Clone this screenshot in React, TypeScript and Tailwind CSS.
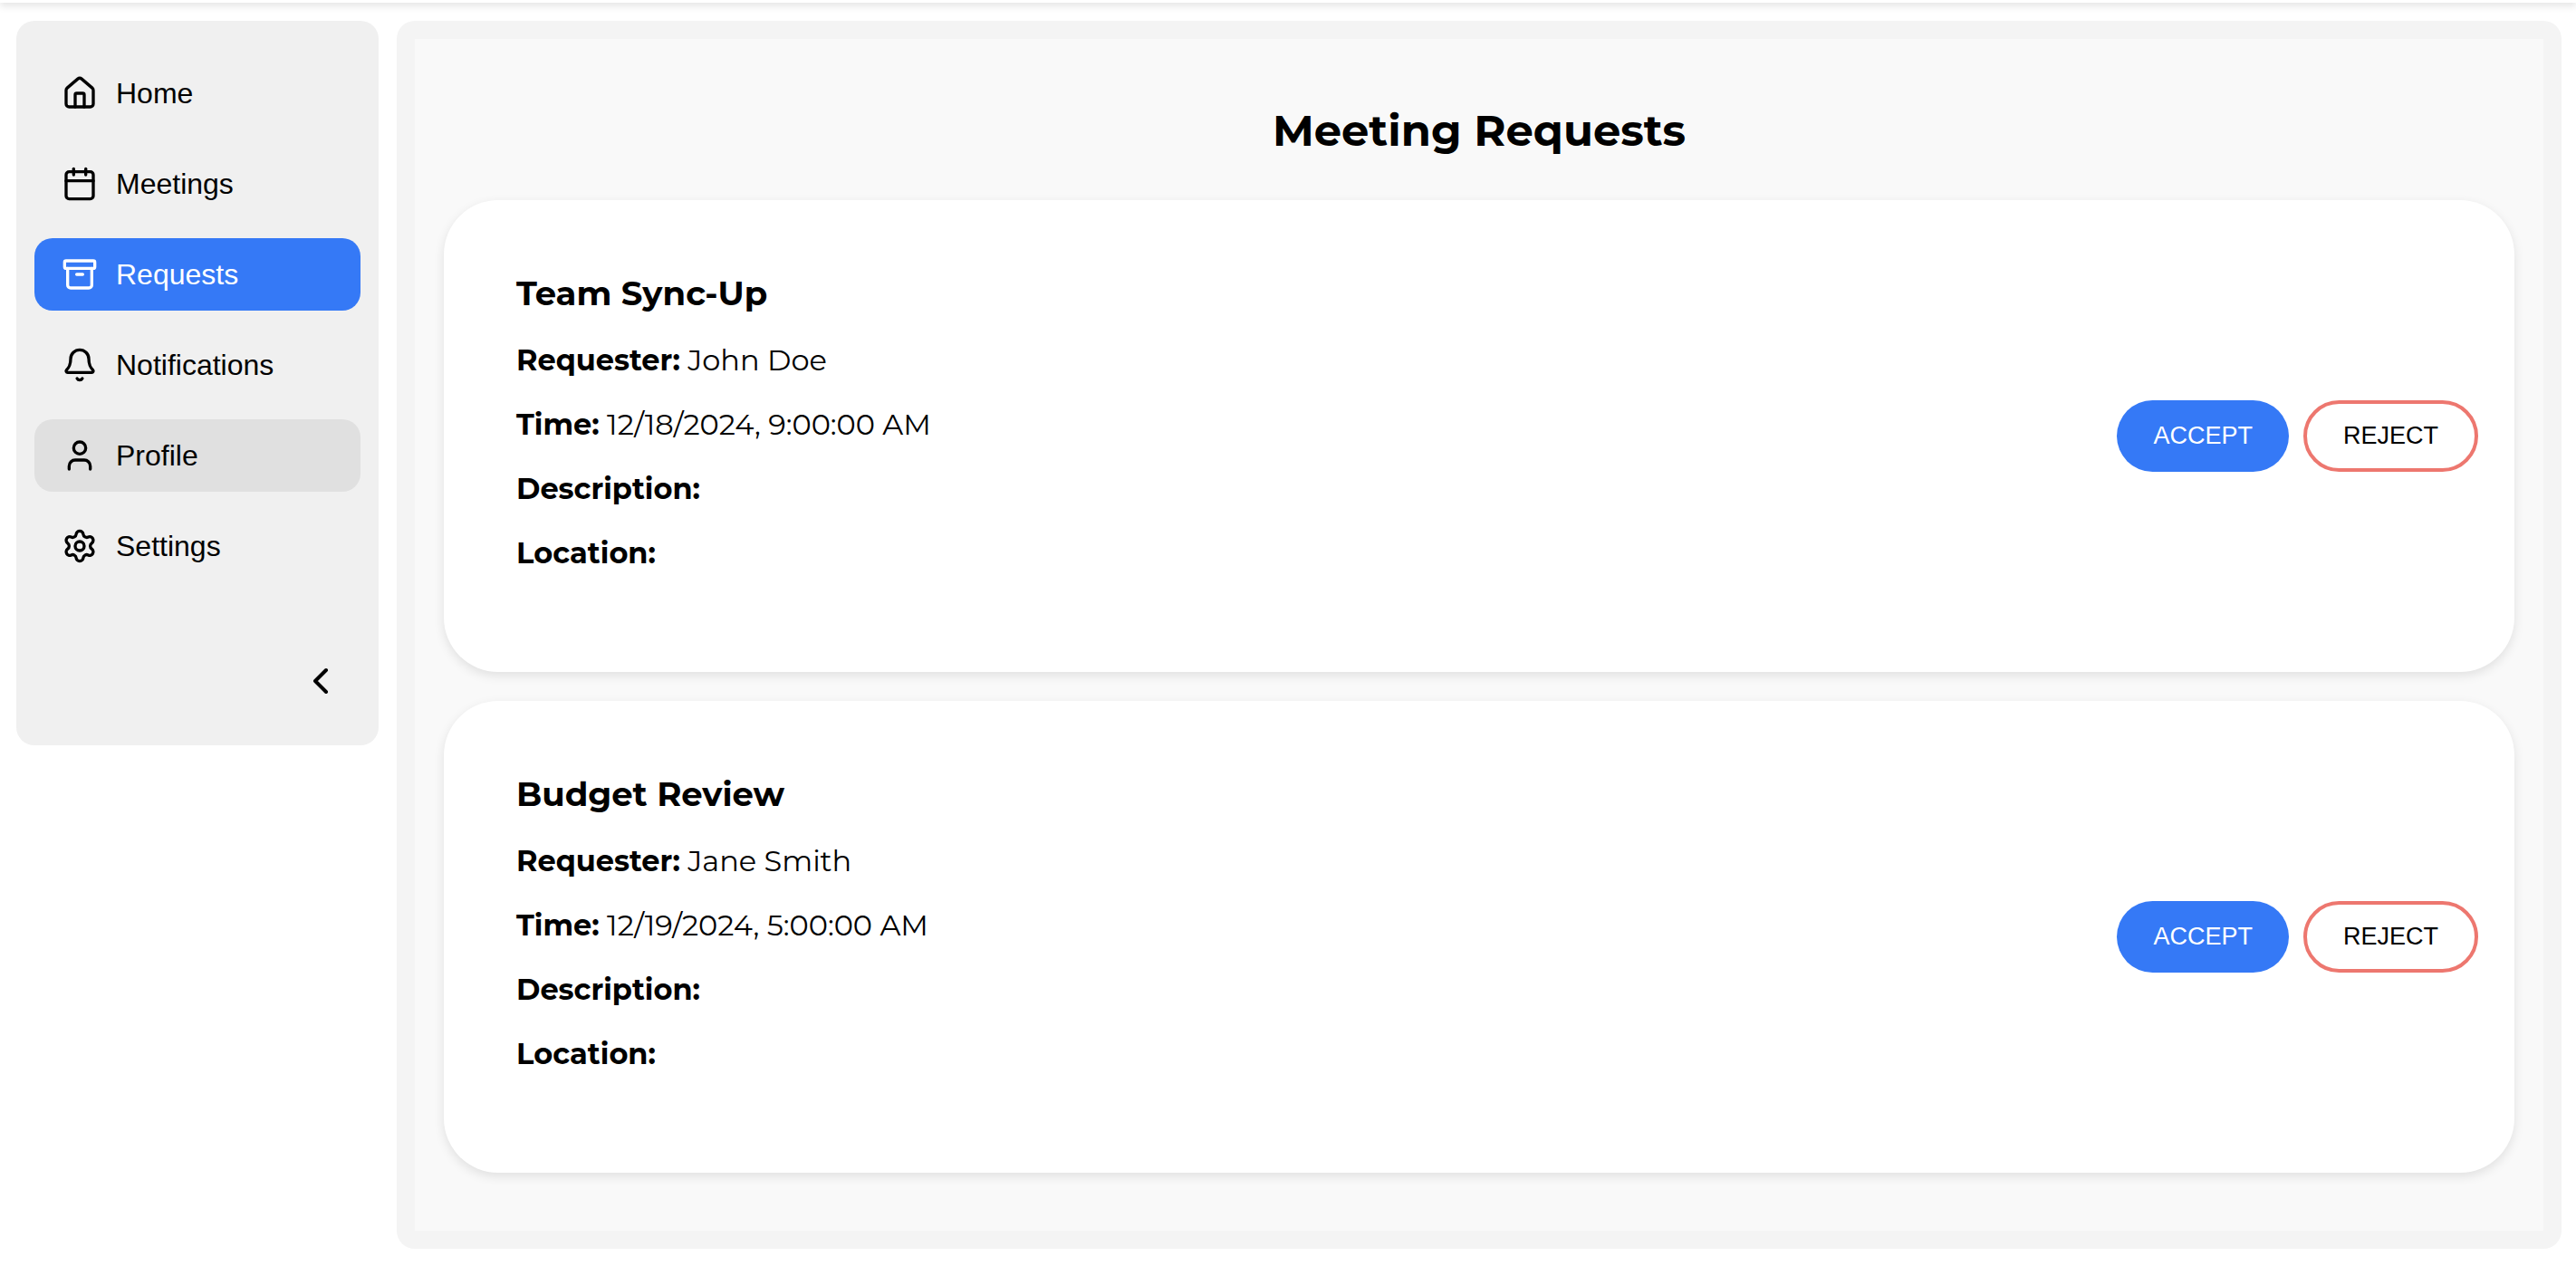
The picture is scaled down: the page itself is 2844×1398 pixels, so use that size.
import type { LucideIcon } from "lucide-react";
import { Archive, Bell, Calendar, ChevronLeft, House, Settings, User } from "lucide-react";

type NavItem = { label: string; icon: LucideIcon; state?: "active" | "hover" };

const navItems: NavItem[] = [
  { label: "Home", icon: House },
  { label: "Meetings", icon: Calendar },
  { label: "Requests", icon: Archive, state: "active" },
  { label: "Notifications", icon: Bell },
  { label: "Profile", icon: User, state: "hover" },
  { label: "Settings", icon: Settings },
];

type MeetingRequest = {
  title: string;
  requester: string;
  time: string;
  description: string;
  location: string;
};

const requests: MeetingRequest[] = [
  { title: "Team Sync-Up", requester: "John Doe", time: "12/18/2024, 9:00:00 AM", description: "", location: "" },
  { title: "Budget Review", requester: "Jane Smith", time: "12/19/2024, 5:00:00 AM", description: "", location: "" },
];

function navClass(state?: "active" | "hover") {
  const base = "flex h-20 items-center gap-5 rounded-[20px] px-[30px] text-[32px]";
  if (state === "active") return `${base} bg-[#3579f6] text-white`;
  if (state === "hover") return `${base} bg-[#e0e0e0] text-black`;
  return `${base} text-black hover:bg-[#e0e0e0]`;
}

function Sidebar() {
  return (
    <aside className="flex w-[400px] shrink-0 flex-col gap-[85px] rounded-[20px] bg-[#f0f0f0] px-5 pt-10 pb-[47px] font-['Liberation_Sans',Arial,sans-serif]">
      <nav className="flex flex-col gap-5">
        {navItems.map(({ label, icon: Icon, state }) => (
          <a key={label} href="#" className={navClass(state)} aria-current={state === "active" ? "page" : undefined}>
            <Icon size={40} />
            <span>{label}</span>
          </a>
        ))}
      </nav>
      <button type="button" aria-label="Collapse sidebar" className="mr-5 self-end">
        <ChevronLeft size={48} />
      </button>
    </aside>
  );
}

function Detail({ label, value }: { label: string; value: string }) {
  return (
    <p>
      <strong className="font-bold">{label}:</strong> {value}
    </p>
  );
}

function RequestCard({ request }: { request: MeetingRequest }) {
  return (
    <article className="flex items-center justify-between rounded-[60px] bg-white p-10 shadow-[0_4px_12px_rgba(0,0,0,0.1)]">
      <div className="flex flex-col gap-8 px-10 pt-10 pb-[72px] text-[32px] leading-[39px]">
        <h3 className="text-[37px] leading-[45px] font-bold">{request.title}</h3>
        <Detail label="Requester" value={request.requester} />
        <Detail label="Time" value={request.time} />
        <Detail label="Description" value={request.description} />
        <Detail label="Location" value={request.location} />
      </div>
      <div className="flex gap-4 font-['Liberation_Sans',Arial,sans-serif] text-[27px] leading-[31px]">
        <button type="button" className="rounded-[40px] bg-[#3579f6] px-10 text-white">
          ACCEPT
        </button>
        <button type="button" className="rounded-[40px] border-4 border-[#ed776f] bg-white px-10 py-5 text-black">
          REJECT
        </button>
      </div>
    </article>
  );
}

export default function App() {
  return (
    <div className="flow-root min-h-screen overflow-hidden bg-white font-['Montserrat','Inter',sans-serif] text-black">
      {/* Only the lower edge of the top bar is in view. */}
      <header className="-mt-[77px] h-20 bg-white shadow-[0_4px_8px_rgba(0,0,0,0.1)]" />
      <div className="flex items-start gap-5 py-5 pr-4 pl-[18px]">
        <Sidebar />
        <main className="min-w-0 flex-1 rounded-[20px] bg-[#f4f4f4] p-5">
          <section className="bg-[#f9f9f9] px-8 pt-[72px] pb-16">
            <h2 className="mb-12 text-center text-[48px] leading-[58px] font-bold">Meeting Requests</h2>
            <div className="flex flex-col gap-8">
              {requests.map((request) => (
                <RequestCard key={request.title} request={request} />
              ))}
            </div>
          </section>
        </main>
      </div>
    </div>
  );
}
